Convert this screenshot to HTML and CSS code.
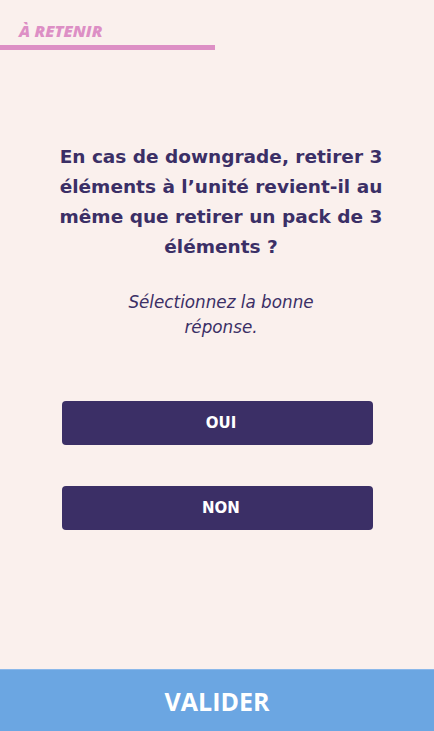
FILE: index.html
```html
<!DOCTYPE html>
<html lang="fr">
<head>
<meta charset="utf-8">
<link rel="stylesheet" href="styles.css">
</head>
<body>
<div class="screen">
  <header class="tag">
    <span class="tag-label">À RETENIR</span>
    <div class="tag-bar"></div>
  </header>
  <main class="content">
    <h1 class="question">En cas de downgrade, retirer 3 éléments à l’unité revient-il au même que retirer un pack de 3 éléments ?</h1>
    <p class="hint">Sélectionnez la bonne réponse.</p>
    <div class="answers">
      <button class="answer">OUI</button>
      <button class="answer">NON</button>
    </div>
  </main>
  <footer class="validate">VALIDER</footer>
</div>
</body>
</html>
```
FILE: styles.css
```css
* { box-sizing: border-box; }
html, body { margin: 0; padding: 0; }
body { background: #faf0ed; }
.screen {
  width: 434px;
  height: 731px;
  display: flex;
  flex-direction: column;
  background: #faf0ed;
}
.tag { padding-top: 20px; }
.tag-label {
  display: block;
  padding-left: 19px;
  font-family: "Open Sans", sans-serif;
  font-style: italic;
  font-weight: 800;
  font-size: 16.5px;
  line-height: 22px;
  color: #dd8fc5;
}
.tag-bar {
  margin-top: 3px;
  width: 215px;
  height: 5px;
  background: #dd8fc5;
}
.content {
  flex: 1;
  display: flex;
  flex-direction: column;
  align-items: center;
  padding-top: 92px;
}
.question {
  margin: 0;
  width: 352px;
  margin-left: 8px;
  text-align: center;
  font-family: "DejaVu Sans", sans-serif;
  font-weight: 700;
  font-size: 18.5px;
  line-height: 30px;
  color: #3b2f66;
}
.hint {
  margin: 28px 0 0;
  width: 214px;
  margin-left: 8px;
  text-align: center;
  font-family: "DejaVu Sans", sans-serif;
  font-style: italic;
  font-weight: 400;
  font-size: 16.8px;
  line-height: 25px;
  color: #3b2f66;
}
.answers {
  margin-top: 61px;
  display: flex;
  flex-direction: column;
  gap: 41px;
}
.answer {
  width: 311px;
  height: 44px;
  border: none;
  border-radius: 4px;
  background: #3b2f66;
  color: #ffffff;
  font-family: "DejaVu Sans", sans-serif;
  font-weight: 700;
  font-size: 15px;
  padding: 0;
  padding-left: 8px;
}
.validate {
  height: 62px;
  background: #6ba6e2;
  color: #ffffff;
  display: flex;
  align-items: center;
  justify-content: center;
  font-family: "Open Sans", sans-serif;
  font-weight: 700;
  font-size: 25px;
  border-top: 1px solid #8ab8ea;
}
```
